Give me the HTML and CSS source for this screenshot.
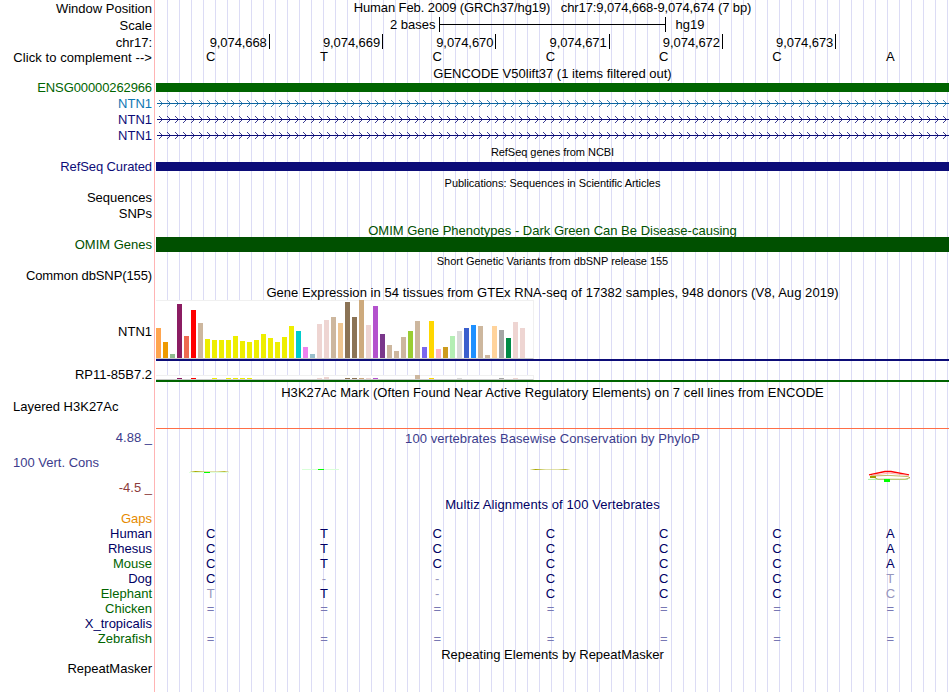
FILE: index.html
```
<!DOCTYPE html>
<html>
<head>
    <meta charset="utf-8">
    <title>Human chr17:9,074,668-9,074,674 Genome Browser</title>
    <link rel="stylesheet" href="styles.css">
</head>
<body>
    <svg class="defs" width="0" height="0">
        <defs>
            <pattern id="arrows-light" width="8" height="7" patternUnits="userSpaceOnUse">
                <path d="M2 0h1v1h1v1h1v1h1v1h-1v1h-1v1h-1v1h-1v-1h1v-1h1v-1h1v-1h-1v-1h-1v-1h-1z" class="head light"/>
            </pattern>
            <pattern id="arrows-dark" width="8" height="7" patternUnits="userSpaceOnUse">
                <path d="M2 0h1v1h1v1h1v1h1v1h-1v1h-1v1h-1v1h-1v-1h1v-1h1v-1h1v-1h-1v-1h-1v-1h-1z" class="head dark"/>
            </pattern>
        </defs>
    </svg>
    <div class="browser">
        <div class="row position">
            <div class="label low">Window Position</div>
            <div class="track title t-position">Human Feb. 2009 (GRCh37/hg19) &nbsp; chr17:9,074,668-9,074,674 (7 bp)</div>
        </div>
        <div class="row scale">
            <div class="label low">Scale</div>
            <div class="track ruler"><span>2 bases</span><div class="scale-bar"><div></div></div><span>hg19</span></div>
        </div>
        <div class="row chrom">
            <div class="label low">chr17:</div>
            <div class="track ticks"><span>9,074,668</span><span>9,074,669</span><span>9,074,670</span><span>9,074,671</span><span>9,074,672</span><span>9,074,673</span><span></span></div>
        </div>
        <div class="row complement">
            <div class="label low wide">Click to complement --&gt;</div>
            <div class="track bases"><span>C</span><span>T</span><span>C</span><span>C</span><span>C</span><span>C</span><span>A</span></div>
        </div>

        <div class="row h14">
            <div class="label"></div>
            <div class="track title">GENCODE V50lift37 (1 items filtered out)</div>
        </div>
        <div class="row">
            <div class="label green tight">ENSG00000262966</div>
            <div class="track"><div class="bar gene"></div></div>
        </div>
        <div class="row">
            <div class="label blue">NTN1</div>
            <div class="track"><svg class="intron" width="792" height="7"><rect y="3" width="792" height="1" class="light"/><rect width="792" height="7" fill="url(#arrows-light)"/></svg></div>
        </div>
        <div class="row">
            <div class="label navy">NTN1</div>
            <div class="track"><svg class="intron" width="792" height="7"><rect y="3" width="792" height="1" class="dark"/><rect width="792" height="7" fill="url(#arrows-dark)"/></svg></div>
        </div>
        <div class="row">
            <div class="label navy">NTN1</div>
            <div class="track"><svg class="intron" width="792" height="7"><rect y="3" width="792" height="1" class="dark"/><rect width="792" height="7" fill="url(#arrows-dark)"/></svg></div>
        </div>

        <div class="row h15">
            <div class="label"></div>
            <div class="track title small">RefSeq genes from NCBI</div>
        </div>
        <div class="row">
            <div class="label navy tight">RefSeq Curated</div>
            <div class="track"><div class="bar refseq"></div></div>
        </div>

        <div class="row h15">
            <div class="label"></div>
            <div class="track title small">Publications: Sequences in Scientific Articles</div>
        </div>
        <div class="row"><div class="label">Sequences</div><div class="track"></div></div>
        <div class="row"><div class="label">SNPs</div><div class="track"></div></div>

        <div class="row h15">
            <div class="label"></div>
            <div class="track title low omim-green">OMIM Gene Phenotypes - Dark Green Can Be Disease-causing</div>
        </div>
        <div class="row">
            <div class="label omim-green">OMIM Genes</div>
            <div class="track"><div class="bar omim"></div></div>
        </div>

        <div class="row h15">
            <div class="label"></div>
            <div class="track title small">Short Genetic Variants from dbSNP release 155</div>
        </div>
        <div class="row"><div class="label tight">Common dbSNP(155)</div><div class="track"></div></div>

        <div class="row">
            <div class="label"></div>
            <div class="track title low t-gtex">Gene Expression in 54 tissues from GTEx RNA-seq of 17382 samples, 948 donors (V8, Aug 2019)</div>
        </div>
        <div class="row gtex">
            <div class="label">NTN1</div>
            <div class="track"><div class="chart" id="ntn1"></div><div class="model navy-line"></div></div>
        </div>
        <div class="row gtex-low">
            <div class="label">RP11-85B7.2</div>
            <div class="track"><div class="chart" id="rp11"></div><div class="model green-line"></div></div>
        </div>

        <div class="row h17">
            <div class="label"></div>
            <div class="track title t-h3k">H3K27Ac Mark (Often Found Near Active Regulatory Elements) on 7 cell lines from ENCODE</div>
        </div>
        <div class="row layered">
            <div class="label left">Layered H3K27Ac</div>
            <div class="track"><div class="signal"></div></div>
        </div>

        <div class="row h15">
            <div class="label cons">4.88 _</div>
            <div class="track title low cons t-cons">100 vertebrates Basewise Conservation by PhyloP</div>
        </div>
        <div class="row phylop">
            <div class="label">
                <div class="left cons">100 Vert. Cons</div>
                <div class="minus">-4.5 _</div>
            </div>
            <div class="track">
                <svg width="794" height="50">
                    <defs>
                        <linearGradient id="fade">
                            <stop offset="0" stop-color="#b0b000" stop-opacity="0.1"/>
                            <stop offset="0.14" stop-color="#a8a800"/>
                            <stop offset="0.4" stop-color="#c8c860" stop-opacity="0.55"/>
                            <stop offset="0.7" stop-color="#c8c860" stop-opacity="0.55"/>
                            <stop offset="0.88" stop-color="#a8a800" stop-opacity="0.8"/>
                            <stop offset="1" stop-color="#b0b000" stop-opacity="0.1"/>
                        </linearGradient>
                    </defs>
                    <rect x="34" y="26" width="39" height="1" fill="url(#fade)"/>
                    <rect x="33" y="27" width="40" height="1" fill="#e0ffe0"/>
                    <rect x="48" y="27" width="6" height="1" fill="#00ff00"/>
                    <rect x="146" y="24" width="37" height="1" fill="#d8ffd8"/>
                    <rect x="162" y="24" width="6" height="1" fill="#00ff00"/>
                    <rect x="374" y="24" width="40" height="1" fill="url(#fade)"/>
                    <path d="M712 34.4h40" stroke="#a8f0a8"/>
                    <path d="M715 31l18-.6l19 1.2l2 1.2l-5 1.4h-27z" fill="#ffffff" stroke="#b4a83c" stroke-width="0.8"/>
                    <rect x="714" y="31" width="6" height="2" fill="#9c9c00"/>
                    <path d="M713 29.8l16-3.3h6l18 3.3" fill="none" stroke="#ff0000" stroke-width="1.3"/>
                    <path d="M716 30.2l17-2l18 2" fill="none" stroke="#ff9090" stroke-width="0.7"/>
                    <rect x="728" y="34" width="6" height="3" fill="#00ff00"/>
                </svg>
            </div>
        </div>

        <div class="row">
            <div class="label"></div>
            <div class="track title multiz t-multiz">Multiz Alignments of 100 Vertebrates</div>
        </div>
        <div class="row h15"><div class="label gaps">Gaps</div><div class="track"></div></div>
        <div class="row h15">
            <div class="label multiz">Human</div>
            <div class="track bases multiz"><span>C</span><span>T</span><span>C</span><span>C</span><span>C</span><span>C</span><span>A</span></div>
        </div>
        <div class="row h15">
            <div class="label multiz">Rhesus</div>
            <div class="track bases multiz"><span>C</span><span>T</span><span>C</span><span>C</span><span>C</span><span>C</span><span>A</span></div>
        </div>
        <div class="row h15">
            <div class="label species">Mouse</div>
            <div class="track bases multiz"><span>C</span><span>T</span><span>C</span><span>C</span><span>C</span><span>C</span><span>A</span></div>
        </div>
        <div class="row h15">
            <div class="label multiz">Dog</div>
            <div class="track bases multiz"><span>C</span><span class="dim">-</span><span class="dim">-</span><span>C</span><span>C</span><span>C</span><span class="dim">T</span></div>
        </div>
        <div class="row h15">
            <div class="label species">Elephant</div>
            <div class="track bases multiz"><span class="dim">T</span><span>T</span><span class="dim">-</span><span>C</span><span>C</span><span>C</span><span class="dim">C</span></div>
        </div>
        <div class="row h15">
            <div class="label species">Chicken</div>
            <div class="track bases unaligned"><span>=</span><span>=</span><span>=</span><span>=</span><span>=</span><span>=</span><span>=</span></div>
        </div>
        <div class="row h15"><div class="label multiz">X_tropicalis</div><div class="track"></div></div>
        <div class="row h15">
            <div class="label species">Zebrafish</div>
            <div class="track bases unaligned"><span>=</span><span>=</span><span>=</span><span>=</span><span>=</span><span>=</span><span>=</span></div>
        </div>

        <div class="row h15">
            <div class="label"></div>
            <div class="track title low">Repeating Elements by RepeatMasker</div>
        </div>
        <div class="row h15"><div class="label">RepeatMasker</div><div class="track"></div></div>
    </div>
    <script>
        // one color per tissue
        var yellow = '#eeee00';
        var colors = ['#ffa54f', '#ee9a00', '#8fbc8f', '#8b1c62', '#ee6a50', '#ff0000', '#cdb79e',
            yellow, yellow, yellow, yellow, yellow, yellow, yellow, yellow, yellow, yellow, yellow, yellow, yellow,
            '#00cdcd', '#ee82ee', '#9ac0cd', '#eed5d2', '#eed5d2', '#cdb79e', '#eec591', '#8b7355',
            '#8b7355', '#cdaa7d', '#eed5d2', '#b452cd', '#7a378b', '#cdb79e', '#cdb79e', '#cdb79e',
            '#9acd32', '#cdb79e', '#7a67ee', '#ffd700', '#ffb6c1', '#cd9b1d', '#b4eeb4', '#d9d9d9',
            '#3a5fcd', '#1e90ff', '#cdb79e', '#cdb79e', '#ffd39b', '#a6a6a6', '#008b45', '#eed5d2', '#eed5d2', '#ff00ff'];

        var ntn1 = [30, 16, 4, 54, 22, 48, 35, 19, 18, 18, 18, 22, 17, 16, 18, 24, 20, 16, 21, 32, 27, 11, 4, 34, 38, 41, 35, 56,
            41, 58, 33, 52, 24, 13, 7, 21, 27, 37, 11, 37, 9, 11, 22, 27, 30, 33, 32, 3, 32, 28, 20, 36, 30, 0];
        var rp11 = [0, 0, 0, 1, 0, 1, 0, 0, 1, 0, 1, 1, 1, 1, 0, 0, 0, 0, 0, 0, 0, 0, 0, 1, 2, 0, 0, 1,
            1, 1, 1, 1, 0, 0, 0, 0, 0, 4, 0, 1, 0, 0, 0, 1, 0, 0, 0, 0, 0, 1, 0, 1, 0, 0];

        function drawChart(id, values) {
            var chart = document.getElementById(id);
            for (var i = 0; i < values.length; i++) {
                var bar = document.createElement('div');
                bar.style.height = values[i] + 'px';
                bar.style.backgroundColor = colors[i];
                chart.appendChild(bar);
            }
        }

        drawChart('ntn1', ntn1);
        drawChart('rp11', rp11);
    </script>
</body>
</html>
```
FILE: styles.css
```
body {
    margin: 0;
    background-color: #fff;
    color: #000;
    font-family: "Liberation Sans", Arial, Helvetica, sans-serif;
    font-size: 13px;
    line-height: 15px;
    overflow: hidden;
}

.defs {
    display: block;
}

/* red divider next to the labels, guide lines every 12px after it */
.browser {
    width: 950px;
    height: 692px;
    background-image: linear-gradient(to right, #ffb4b4 1px, transparent 1px), repeating-linear-gradient(to right, transparent 0, transparent 11px, #dcdcf5 11px, #dcdcf5 12px);
    background-position: 154px 0, 156px 0;
    background-size: 1px 100%, 794px 100%;
    background-repeat: no-repeat;
}

.row {
    display: flex;
    height: 16px;
}

.h14 { height: 14px; }
.h15 { height: 15px; }
.h17 { height: 17px; }

.label {
    width: 152px;
    margin-right: 4px;
    flex-shrink: 0;
    text-align: right;
    white-space: nowrap;
}

.track {
    width: 793px;
    flex-shrink: 0;
    white-space: nowrap;
}

.title {
    text-align: center;
}

.small {
    font-size: 11px;
    letter-spacing: -0.04px;
    padding-top: 1px;
}

.low {
    padding-top: 1px;
}

.wide { letter-spacing: 0.08px; }
.tight { letter-spacing: -0.11px; }

.left {
    text-align: left;
    padding-left: 13px;
    box-sizing: border-box;
}

.position, .scale, .complement { height: 17px; }
.chrom { height: 15px; }

.t-position { letter-spacing: -0.1px; }

.ruler {
    display: flex;
    padding-left: 234px;
    box-sizing: border-box;
}

.scale-bar {
    width: 225px;
    height: 15px;
    margin: 0 10px 0 3px;
    border-left: 1px solid #000;
    border-right: 1px solid #000;
}

.scale-bar div {
    height: 1px;
    margin-top: 7px;
    background-color: #000;
}

.ticks {
    display: grid;
    grid-template-columns: repeat(7, 1fr);
    margin-left: 0.5px;
    text-align: right;
    letter-spacing: -0.08px;
}

.ticks span {
    padding: 1px 2px 0 0;
    height: 14px;
    border-right: 1px solid #000;
}

.ticks span:last-child {
    border-right: none;
}

.bases {
    display: grid;
    grid-template-columns: repeat(7, 1fr);
    margin-left: -2px;
    text-align: center;
}

/* colors */
.green { color: #006400; }
.species { color: #006400; }
.omim-green { color: #005000; }
.blue { color: #0c78b4; }
.navy { color: #0c0c78; }
.multiz { color: #000064; }
.cons { color: #3c3c8c; }
.minus { color: #8c3c3c; }
.gaps { color: #e68a00; }
.dim { color: #9696be; }
.unaligned { color: #7878b4; }

.bar {
    height: 9px;
    margin-top: 3px;
}

.gene { background-color: #006400; }
.refseq { background-color: #0c0c78; }

.omim {
    height: 15px;
    margin-top: 0;
    background-color: #005000;
}

.intron {
    display: block;
    margin: 4px 0 0 1px;
}

.light { fill: #0c64a0; }
.dark { fill: #0c0c78; }
.head { fill-opacity: 0.8; }

/* expression charts */
.gtex { height: 61px; }
.gtex .label { padding-top: 24px; }
.gtex-low { height: 21px; }
.gtex-low .label { padding-top: 6px; }
.t-gtex { letter-spacing: 0.055px; }

.chart {
    display: flex;
    align-items: flex-end;
    gap: 2px;
    width: 378px;
    height: 59px;
    box-sizing: border-box;
    background-color: #fff;
    border-right: 1px solid #f0f0f0;
    border-bottom: 1px solid #c8c8c8;
    box-shadow: inset 0 1px #f0f0f0;
}

.chart div {
    width: 5px;
    flex-shrink: 0;
}

.gtex-low .chart {
    height: 5px;
    margin-top: 14px;
}

.model { height: 2px; }
.navy-line { background-color: #0c0c78; }
.green-line { background-color: #006400; }

.t-h3k {
    padding-top: 3px;
    letter-spacing: 0.06px;
}

.layered { height: 31px; }

.signal {
    height: 1px;
    margin-top: 29px;
    background-color: #ff6e46;
}

.t-cons { letter-spacing: 0.06px; }

.phylop { height: 50px; }

.phylop .label {
    display: flex;
    flex-direction: column;
    gap: 10px;
    padding-top: 10px;
}

.t-multiz {
    padding-top: 2px;
    letter-spacing: 0.1px;
}
```
